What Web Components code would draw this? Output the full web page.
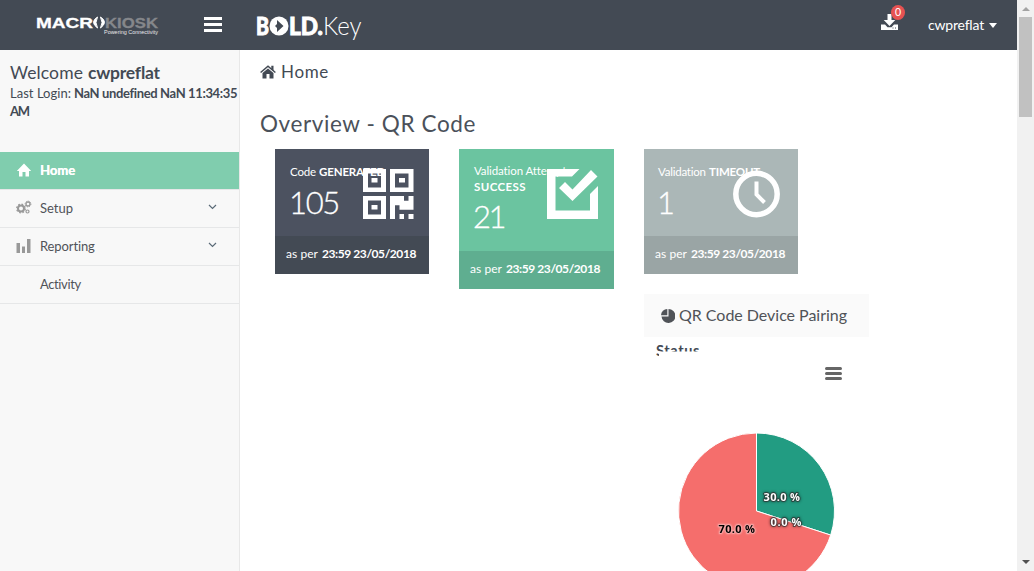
<!DOCTYPE html>
<html lang="en">
<head>
<meta charset="utf-8">
<title>BOLD.Key</title>
<style>
html,body{margin:0;height:100%;overflow:hidden}
body{font-family:Lato,"Open Sans",sans-serif;color:#434a54;background:#fff}
</style>
</head>
<body>
<app-shell></app-shell>
<script>
const define = (name, html, ready) => {
  const t = document.createElement('template');
  t.innerHTML = html;
  customElements.define(name, class extends HTMLElement {
    constructor() { super(); this.attachShadow({mode: 'open'}).append(t.content.cloneNode(true)); }
    connectedCallback() { if (ready) ready.call(this, this.shadowRoot); }
  });
};

/* A single line of text, tracked to fill the width in its "w" attribute. */
define('text-run', `<style>:host{display:inline-block;white-space:pre}</style><slot></slot>`, function () {
  const w = +this.getAttribute('w'), n = this.textContent.length;
  this.style.letterSpacing = '0';
  const now = this.getBoundingClientRect().width;
  if (w && now) { this.style.letterSpacing = ((w - now) / n).toFixed(3) + 'px'; this.style.width = w + 'px'; }
});

define('brand-logo', `<style>
:host{display:block;width:122px}
svg{display:block}
</style>
<svg width="124" height="24" viewBox="0 0 124 24" font-family="Liberation Sans, sans-serif">
<text x="0" y="13" font-size="15" font-weight="700" fill="#fff" stroke="#fff" stroke-width=".3" textLength="57" lengthAdjust="spacingAndGlyphs">MACR</text>
<path d="M61.500 2q-8 5 0 11q-3-5.500-0-11zM64.500 2q8 5 0 11q3-5.500 0-11z" fill="#fff" stroke="#fff" stroke-width="1"/>
<text x="69" y="13" font-size="15" font-weight="700" fill="#85878b" stroke="#85878b" stroke-width=".3" textLength="53" lengthAdjust="spacingAndGlyphs">KIOSK</text>
<text x="68" y="18.500" font-size="5.200" fill="#e8e9ea" textLength="54" lengthAdjust="spacingAndGlyphs">Powering Connectivity</text>
</svg>`);

define('product-logo', `<style>:host{display:block}svg{display:block}</style>
<svg width="114" height="34" viewBox="0 0 114 34" font-family="Lato, sans-serif" fill="#fff">
<text x="0" y="23" font-size="24" font-weight="900" stroke="#fff" stroke-width=".9" textLength="13" lengthAdjust="spacingAndGlyphs">B</text>
<circle cx="23" cy="14" r="9.500"/>
<path d="M21 8l6.500 6-6.500 6v-4l-2-2 2-2z" fill="#434a54"/>
<text x="33" y="23" font-size="24" font-weight="900" stroke="#fff" stroke-width=".9" textLength="34" lengthAdjust="spacingAndGlyphs">LD.</text>
<text x="67" y="23" font-size="25" font-weight="300" textLength="38.500" lengthAdjust="spacingAndGlyphs">Key</text>
</svg>`);

define('top-bar', `<style>
:host{display:flex;height:50px;background:#434a54;color:#fff;align-items:flex-start}
brand-logo{margin:15px 0 0 36px}
.menu{display:grid;gap:3px;margin:17px 0 0 46px;width:18px}
.menu i{height:3px;background:#fff}
product-logo{margin:12px 0 0 34px}
.dl{position:relative;margin:14px 0 0 auto;width:17px;height:17px}
.dl svg{display:block}
.badge{position:absolute;left:10px;top:-9px;width:14px;height:15px;border-radius:50%;background:#e65252;font-size:10.500px;line-height:15px;text-align:center}
.user{display:flex;margin:15px 20px 0 30px;font-size:14px;line-height:20px;align-items:center}
.user i{margin:1px 0 0 5px;border:4.500px solid transparent;border-top:5px solid #fff;border-bottom:0}
</style>
<brand-logo></brand-logo><div class="menu"><i></i><i></i><i></i></div><product-logo></product-logo>
<div class="dl"><svg width="17" height="17"><path d="M6.500 0h4v6h3.800l-5.800 6-5.800-6h3.800zM0 10.500h4l2.500 2.800h4l2.500-2.800h4v5.500H0z" fill="#fff"/><path d="M11.500 14h1m1.500 0h1" stroke="#434a54"/></svg><span class="badge">0</span></div>
<div class="user"><text-run w="56">cwpreflat</text-run><i></i></div>`);

define('nav-item', `<style>
:host{display:flex;box-sizing:border-box;height:38px;border-bottom:1px solid #e6e7e8;padding:0 22px 0 16px;align-items:center;font-size:13px;line-height:20px;color:#505358}
:host([active]){background:#80cdae;color:#fff;font-weight:700;text-shadow:.3px 0 #fff}
.icon{width:16px;height:16px;margin:-1px 8px 0 0}
.text{padding-bottom:1px}
.chev{margin:-3px 0 0 auto;display:none}
:host([menu]) .chev{display:block}
</style><div class="icon"><slot name="icon"></slot></div><div class="text"><slot></slot></div>
<svg class="chev" width="9" height="6"><path d="M1 1l3.500 3.500L8 1" fill="none" stroke="#5b6b78" stroke-width="1.200"/></svg>`);

define('side-bar', `<style>
:host{display:block;box-sizing:border-box;width:240px;border-right:1px solid #e8e8e8;background:#f8f8f8}
header{height:90px;padding:12px 0 0 10px;font-size:13px;line-height:18px}
.w{display:flex;gap:5px;font-size:17.500px;line-height:22px}
.l{display:flex;gap:3px}
b{font-weight:700}
svg{display:block}
</style>
<header><div class="w"><text-run w="73">Welcome</text-run><b><text-run w="72">cwpreflat</text-run></b></div>
<div class="l"><text-run w="61">Last Login:</text-run><b><text-run w="163">NaN undefined NaN 11:34:35</text-run></b></div>
<b><text-run w="19">AM</text-run></b></header>
<nav>
<nav-item active><svg slot="icon" width="16" height="16"><path d="M8 1.500L.800 9H3V14.500h3.500V10h3v4.500H13V9h2.200z" fill="#fff"/></svg><text-run w="35">Home</text-run></nav-item>
<nav-item menu><svg slot="icon" width="16" height="16" fill="none" stroke="#999"><circle cx="5" cy="8.500" r="3" stroke-width="2"/><circle cx="5" cy="8.500" r="4.300" stroke-width="1.300" stroke-dasharray="1.700 1.680"/><circle cx="12" cy="4" r="2" stroke-width="1.300"/><circle cx="12" cy="4" r="2.900" stroke-dasharray="1.200 1.080"/><circle cx="11.500" cy="11.500" r="1.500" stroke-width="1.200"/></svg><text-run w="33">Setup</text-run></nav-item>
<nav-item menu><svg slot="icon" width="16" height="16" fill="#999"><path d="M.500 5h3.500v10H.500zM6 8.500h3V15H6zM11 1h3.500v14H11z"/></svg><text-run w="55">Reporting</text-run></nav-item>
<nav-item><text-run w="41">Activity</text-run></nav-item>
</nav>`);

define('stat-card', `<style>
:host{display:block;width:154px;background:var(--bg);color:#fff;font-size:11.500px}
.top{position:relative;padding:15px 0 0 15px;height:var(--h,72px)}
.label{line-height:16px;white-space:nowrap}
.num{font-size:31px;line-height:36px;font-weight:300;margin:var(--gap,4px) 0 0 -1px;-webkit-text-stroke:.3px #fff}
.icon{position:absolute;left:87px;top:19px}
footer{display:flex;gap:4px;background:var(--foot);height:38px;line-height:36px;padding-left:11px;font-size:12px}
b{font-weight:700}
</style>
<div class="top"><div class="label"><slot name="label"></slot></div><div class="num"><slot name="num"></slot></div><div class="icon"><slot name="icon"></slot></div></div>
<footer><text-run w="32">as per</text-run><b><text-run w="94">23:59 23/05/2018</text-run></b></footer>`);

define('pie-chart', `<style>:host{display:block}svg{display:block}text{font:bold 11px "Open Sans",sans-serif;fill:#fff;stroke:#333;stroke-width:1.800px;stroke-opacity:.75;paint-order:stroke;stroke-linejoin:round;filter:drop-shadow(0 0 1.500px #0009)}text.d{fill:#000;stroke:#f8aaa9;filter:drop-shadow(0 0 1px #fff8)}</style>
<svg width="225" height="219" viewBox="644 352 225 219">
<path d="M826.500 368.500h14m-14 5h14m-14 5h14" stroke="#666" stroke-width="3" stroke-linecap="round"/>
<g stroke="#fff" stroke-linejoin="round"><path d="M756.500 511V433A78 78 0 0 1 830.700 535.100z" fill="#229c82"/><path d="M756.500 511L830.700 535.100A78 78 0 1 1 756.500 433z" fill="#f56e6c"/></g>
<text x="763.500" y="501" textLength="36.500">30.0 %</text><text x="770.500" y="526" textLength="31">0.0 %</text><text class="d" x="718.500" y="533" textLength="36.500">70.0 %</text>
</svg>`);

define('chart-panel', `<style>
:host{display:block;width:225px}
header{display:flex;align-items:center;height:43px;background:#fafafa;padding-left:17px;gap:4px;font-size:16px;color:#505358}
header text-run{padding-bottom:2px}
.status{height:15px;padding-left:12px;font-size:14.500px;font-weight:700;line-height:28px;clip-path:polygon(0 0,100% 0,100% 14.500px,15px 14.500px,15px 19px,0 19px)}
</style>
<header><svg width="14" height="14" fill="#505358"><path d="M7.500 0a7 7 0 1 1-7 7.500h7z"/><path d="M6.300 0v6.200H0A6.500 6.500 0 0 1 6.300 0z"/></svg><text-run w="168">QR Code Device Pairing</text-run></header>
<div class="status"><text-run w="44">Status</text-run></div><pie-chart></pie-chart>`);

define('main-view', `<style>
:host{display:block;flex:1;min-width:0}
.crumb{display:flex;gap:5px;padding:11px 0 0 20px;align-items:center;font-size:17px;line-height:22px}
h2{margin:27px 0 0 20px;font-size:22.500px;font-weight:400;line-height:28px;color:#4b515a}
.cards{display:flex;align-items:flex-start;padding:11px 0 0 35px;gap:30px}
svg{display:block}
.third{display:grid;gap:20px}
.row{display:flex;gap:3px}
b{font-weight:700}
</style>
<div class="crumb"><svg width="16" height="14" fill="#434a54"><path d="M8 3.500l5.500 4.600V13.500h-4V9h-3v4.500h-4V8.100z"/><path d="M.600 7.500L8 1.300l7.400 6.200" fill="none" stroke="#434a54" stroke-width="1.500"/><path d="M11.300.800h2.200V6l-2.200-2z"/></svg><text-run w="48">Home</text-run></div>
<h2><text-run w="216">Overview - QR Code</text-run></h2>
<div class="cards">
<stat-card style="--bg:#4c5260;--foot:#434a54"><div class="row" slot="label"><text-run w="26">Code</text-run><b><text-run w="66">GENERATED</text-run></b></div><text-run slot="num" w="50">105</text-run>
<svg slot="icon" width="52" height="52" fill="#fff"><path fill-rule="evenodd" d="M1 1h23v23H1zM6 5.500v14h13v-14zM28 1h23.500v23H28zM33 5.500v14h13.500v-14zM1 28h23v23H1zM6 32.500v14h13v-14z"/><path d="M9.500 10h6v4.500h-6zM37 10h6v4.500h-6zM9.500 37h6v4.500h-6zM28 28h14v4.800h4.500V28h5v13.700H37.500V37.300H33V51h-5zM37.500 46h4.500v5h-4.500zM46.500 46h5v5h-5z"/></svg></stat-card>
<stat-card style="--bg:#6bc4a0;--foot:#5fae90;--h:87px;--gap:3px;width:155px"><div slot="label" style="margin-top:-1px"><text-run w="97">Validation Attempts</text-run><br><b><text-run w="52">SUCCESS</text-run></b></div><text-run slot="num" w="31">21</text-run>
<svg slot="icon" width="54" height="52" style="margin-left:1px"><path d="M0 1h32.500L25 8.500H8.500v34H43V26l8-8v33H0z" fill="#fff"/><path d="M12 20l6-6 7.500 7.500L44 2l6.500 6.500L25.500 33z" fill="#fff"/></svg></stat-card>
<div class="third">
<stat-card style="--bg:#abb7b7;--foot:#9aa5a5"><div class="row" slot="label" style="margin-left:-1px"><text-run w="48">Validation</text-run><b><text-run w="51">TIMEOUT</text-run></b></div><text-run slot="num" w="17" style="margin-left:-1px">1</text-run>
<svg slot="icon" width="52" height="52" fill="none" stroke="#fff"><circle cx="25.500" cy="26" r="20.700" stroke-width="5.500"/><path d="M25.500 13.500V26.500l8 8" stroke-width="4"/></svg></stat-card>
<chart-panel></chart-panel>
</div>
</div>`);

define('scroll-bar', `<style>
:host{display:flex;flex-direction:column;align-items:center;width:17px;height:571px;background:#f1f1f1}
i{border:4px solid transparent;border-bottom:4px solid #a3a3a3;border-top:0;margin:7px 0 6px}
.t{width:13px;height:100px;background:#c1c1c1}
i.d{border:4px solid transparent;border-top:4px solid #505050;border-bottom:0;margin:auto 0 7px}
</style><i></i><div class="t"></div><i class="d"></i>`);

define('app-shell', `<style>
:host{display:grid;grid-template-columns:1017px 17px;height:571px;overflow:hidden}
.page{height:571px;overflow:hidden;display:flex;flex-direction:column}
.body{display:flex;flex:1;min-height:0}
</style>
<div class="page"><top-bar></top-bar><div class="body"><side-bar></side-bar><main-view></main-view></div></div><scroll-bar></scroll-bar>`);
</script>
</body>
</html>
